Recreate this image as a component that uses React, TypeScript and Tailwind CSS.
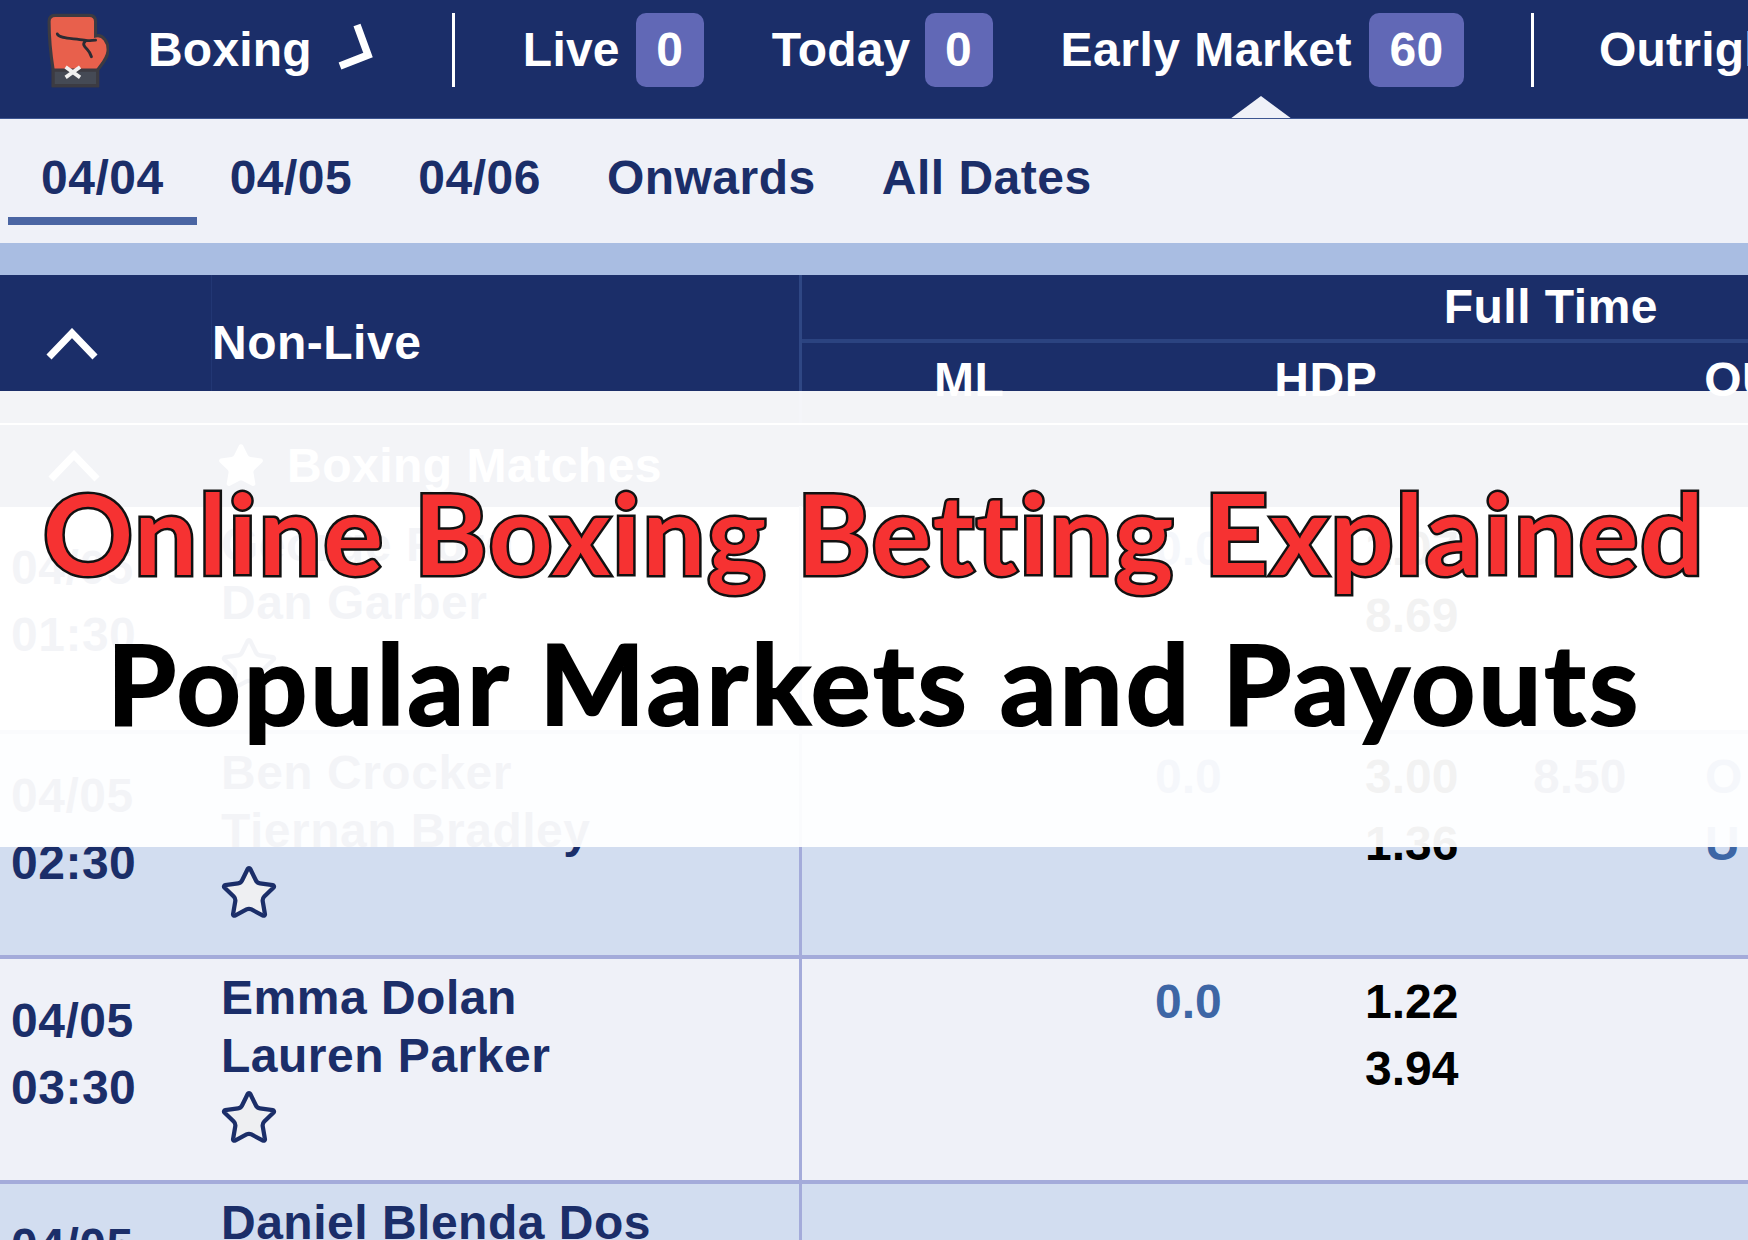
import { Star } from 'lucide-react';

const navy = 'text-[#1b2e69]';

function Glove() {
  return (
    <svg width="62" height="75" viewBox="0 0 60 72" className="shrink-0">
      <path d="M2 8Q2 2 8 2H41Q47 2 47 8V22C54 20 60 28 59 37C58 45 52 50 49 55V70H6V55Q2 30 2 8Z" fill="#e8604c" stroke="#3c3b42" strokeWidth="3" />
      <path d="M6 55H49V70H6Z" fill="#454a55" stroke="#3c3b42" strokeWidth="3" />
      <path d="M10 20C12 25 26 24 36 26C39 27 44 26 47 26M37 27C34 30 36 32 39 35C41 37 42 39 43 42" fill="none" stroke="#2b2b33" strokeWidth="2.8" strokeLinecap="round" />
      <path d="M18 52L32 62M32 52L18 62" stroke="#f1f1f1" strokeWidth="3.6" />
    </svg>
  );
}

function Chevron({ className }: { className: string }) {
  return (
    <svg width="52" height="32" viewBox="0 0 52 32" className={className}>
      <polyline points="3,29 26,5 49,29" fill="none" stroke="white" strokeWidth="7" />
    </svg>
  );
}

function Badge({ n, w }: { n: string; w: string }) {
  return (
    <span className={`flex h-[74px] items-center justify-center rounded-[10px] bg-[#6168b6] ${w}`}>{n}</span>
  );
}

function Sep() {
  return <span className="h-[74px] w-[3px] bg-white" />;
}

function TopNav() {
  return (
    <div className="relative flex h-[119px] items-start overflow-hidden border-b border-[#3d5590] bg-[#1b2e69] pt-[13px] pl-[47px] tracking-[0.2px] whitespace-nowrap text-white">
      <Glove />
      <span className="ml-[39px] flex h-[74px] items-center">Boxing</span>
      <svg width="40" height="50" viewBox="0 0 40 50" className="mt-[7px] ml-[23px] shrink-0">
        <polyline points="22,5 33,35 5,46" fill="none" stroke="white" strokeWidth="7.5" />
      </svg>
      <span className="ml-[77px] flex"><Sep /></span>
      <span className="ml-[68px] flex h-[74px] items-center">Live</span>
      <span className="ml-[16px]"><Badge n="0" w="w-[68px]" /></span>
      <span className="ml-[68px] flex h-[74px] items-center">Today</span>
      <span className="ml-[14px]"><Badge n="0" w="w-[68px]" /></span>
      <span className="ml-[68px] flex h-[74px] items-center tracking-[0.5px]">Early Market</span>
      <span className="ml-[17px]"><Badge n="60" w="w-[95px]" /></span>
      <span className="ml-[67px] flex"><Sep /></span>
      <span className="ml-[65px] flex h-[74px] items-center">Outrights</span>
      <span className="absolute top-[96px] left-[1230px] h-0 w-0 border-x-[31px] border-b-[23px] border-x-transparent border-b-[#eff1f8]" />
    </div>
  );
}

function DateTabs() {
  const tabs = ['04/04', '04/05', '04/06', 'Onwards', 'All Dates'];
  return (
    <div className={`flex h-[124px] bg-[#eff1f8] pl-[8px] ${navy}`}>
      {tabs.map((t, i) => (
        <div key={t} className={`flex h-[106px] items-center border-b-8 px-[33px] pt-[20px] ${i === 0 ? 'border-[#4a65a3]' : 'border-transparent'}`}>
          {t}
        </div>
      ))}
    </div>
  );
}

function TableHead() {
  return (
    <div className="flex h-[148px] bg-[#1b2e69] text-white">
      <div className="flex h-[116px] w-[212px] shrink-0 items-center border-r border-[#223774] pt-[22px] pl-[46px]">
        <Chevron className="" />
      </div>
      <div className="flex h-[116px] w-[587px] shrink-0 items-center pt-[20px]">Non-Live</div>
      <div className="min-w-0 flex-1 border-l-[3px] border-[#2f4784]">
        <div className="flex h-[68px] items-center justify-end border-b-4 border-[#2b4380] pr-[90px]">Full Time</div>
        <div className="flex h-[72px] items-center pt-[2px]">
          <span className="ml-[132px]">ML</span>
          <span className="ml-[270px]">HDP</span>
          <span className="ml-[327px]">OU</span>
        </div>
      </div>
    </div>
  );
}

function SectionRow() {
  return (
    <div className="flex h-[82px] items-center bg-[#1b2e69] text-white">
      <div className="w-[219px] pl-[48px]"><Chevron className="" /></div>
      <Star size={50} className="-ml-[3px]" fill="white" strokeWidth={1} />
      <span className="ml-[21px]">Boxing Matches</span>
    </div>
  );
}

type Match = {
  date: string;
  time: string;
  home: string;
  away: string;
  hdp: string;
  p1: string;
  p2: string;
  p3?: string;
  ou?: string[];
  alt?: boolean;
};

const matches: Match[] = [
  { date: '04/05', time: '01:30', home: 'George Ford', away: 'Dan Garber', hdp: '0.0', p1: '1.07', p2: '8.69' },
  { date: '04/05', time: '02:30', home: 'Ben Crocker', away: 'Tiernan Bradley', hdp: '0.0', p1: '3.00', p2: '1.36', p3: '8.50', ou: ['O', 'U'], alt: true },
  { date: '04/05', time: '03:30', home: 'Emma Dolan', away: 'Lauren Parker', hdp: '0.0', p1: '1.22', p2: '3.94' },
  { date: '04/05', time: '04:30', home: 'Daniel Blenda Dos', away: 'Santos', hdp: '', p1: '', p2: '', alt: true },
];

function MatchRow({ m }: { m: Match }) {
  return (
    <div className={`flex h-[225px] shrink-0 border-b-4 border-[#a4abda] first:h-[228px] ${m.alt ? 'bg-[#d2ddf0]' : 'bg-[#eff1f8]'}`}>
      <div className={`w-[221px] shrink-0 pt-[28px] pl-[11px] leading-[67px] ${navy}`}>
        <div>{m.date}</div>
        <div>{m.time}</div>
      </div>
      <div className={`w-[578px] shrink-0 pt-[10px] leading-[58px] ${navy}`}>
        <div>{m.home}</div>
        <div>{m.away}</div>
        <Star size={60} className="mt-[3px] -ml-[2px]" fill="#eeeff2" strokeWidth={1.7} />
      </div>
      <div className="flex min-w-0 flex-1 border-l-[3px] border-[#a4abda] pt-[9px] leading-[67px] tracking-normal">
        <div className="ml-[353px] w-[210px] shrink-0 text-[#3d66a5]">{m.hdp}</div>
        <div className="w-[168px] shrink-0 text-black">
          <div>{m.p1}</div>
          <div>{m.p2}</div>
        </div>
        <div className="w-[172px] shrink-0 text-[#1b2e69]">{m.p3}</div>
        <div className="text-[#3d66a5]">
          {m.ou?.map((o) => <div key={o}>{o}</div>)}
        </div>
      </div>
    </div>
  );
}

export default function App() {
  return (
    <div className="relative h-[1240px] w-[1748px] overflow-hidden bg-[#eff1f8] font-['Liberation_Sans',Arial,sans-serif] text-[48px] font-bold tracking-[0.5px]">
      <TopNav />
      <DateTabs />
      <div className="h-[32px] bg-[#a9bde2]" />
      <div className="flex flex-col gap-[2px]">
        <TableHead />
        <SectionRow />
      </div>
      <div className="-mt-[1px]">
        {matches.map((m) => <MatchRow key={m.time} m={m} />)}
      </div>

      <div className="absolute top-[391px] left-0 flex h-[456px] w-full flex-col items-center bg-white/95 pt-[66px] font-['Lato',sans-serif] tracking-normal whitespace-nowrap [font-variant-ligatures:none]">
        <h1 className="text-[112px] leading-[150px] font-bold tracking-[1.7px] text-[#f63232] [-webkit-text-stroke:5px_#111] [paint-order:stroke_fill]">
          Online Boxing Betting Explained
        </h1>
        <h2 className="text-[112px] leading-[150px] font-bold tracking-[2.9px] text-black [-webkit-text-stroke:2px_#000]">Popular Markets and Payouts</h2>
      </div>
    </div>
  );
}
